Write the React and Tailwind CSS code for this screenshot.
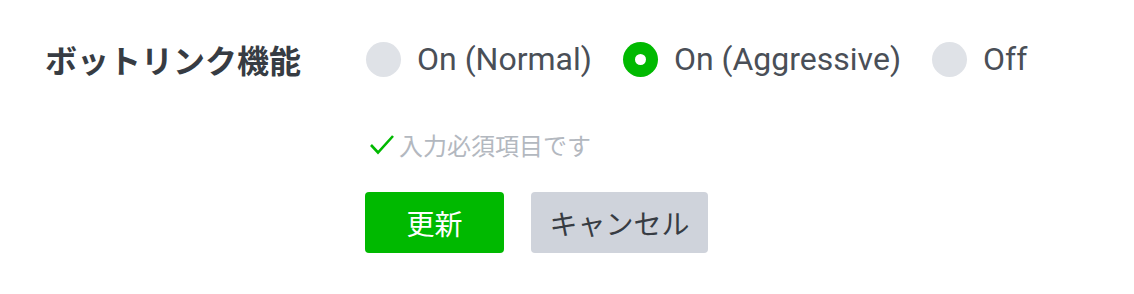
export default function App() {
  const opts = [
    { label: "On (Normal)", checked: false },
    { label: "On (Aggressive)", checked: true },
    { label: "Off", checked: false },
  ];
  return (
    <div className="w-[1134px] h-[294px] bg-white" style={{ fontFamily: '"Noto Sans CJK JP", sans-serif' }}>
      <div className="flex items-center pt-[41px] h-[77px]">
        <div className="w-[366px] pl-[45px] text-[32px] font-bold text-[#373c43] leading-none">
          ボットリンク機能
        </div>
        <div className="flex items-center gap-[31px]">
          {opts.map((o) => (
            <label key={o.label} className="flex items-center gap-[16px]">
              {o.checked ? (
                <span className="w-[35px] h-[35px] rounded-full bg-[#00b900] flex items-center justify-center">
                  <span className="w-[11px] h-[11px] rounded-full bg-white" />
                </span>
              ) : (
                <span className="w-[35px] h-[35px] rounded-full bg-[#dfe2e7]" />
              )}
              <span className="text-[32px] text-[#4a4f57] leading-none" style={{ fontFamily: 'Roboto, sans-serif' }}>
                {o.label}
              </span>
            </label>
          ))}
        </div>
      </div>
      <div className="pl-[369px] mt-[50px] h-[36px] flex items-center gap-[4px]">
        <svg width="26" height="22" viewBox="0 0 26 22" fill="none">
          <polyline points="2,11 9,18.5 24,2" stroke="#00b900" strokeWidth="2.6" />
        </svg>
        <span className="text-[24px] text-[#b3b8bf] leading-none">入力必須項目です</span>
      </div>
      <div className="pl-[365px] mt-[29px] flex gap-[27px]">
        <button className="w-[139px] h-[61px] rounded-[4px] bg-[#00b900] text-white text-[28px] flex items-center justify-center">
          更新
        </button>
        <button className="w-[177px] h-[61px] rounded-[4px] bg-[#cfd3db] text-[#373c43] text-[28px] flex items-center justify-center">
          キャンセル
        </button>
      </div>
    </div>
  );
}
